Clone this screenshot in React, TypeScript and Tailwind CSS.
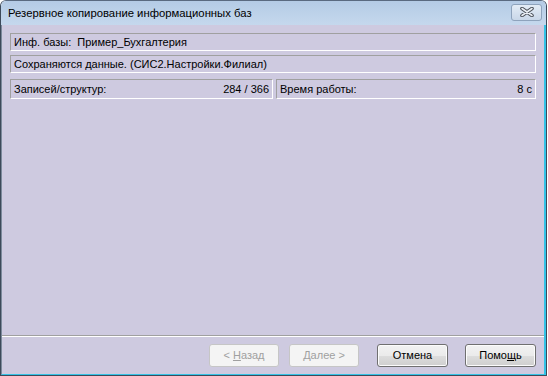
import React from "react";

const font = { fontFamily: '"Liberation Sans", Arial, sans-serif' };

function Field({ children, className = "" }: { children: React.ReactNode; className?: string }) {
  return (
    <div
      className={
        "flex items-center border border-t-[#a0a0a0] border-l-[#a0a0a0] border-b-white border-r-white px-[3px] text-[11px] text-black " +
        className
      }
    >
      {children}
    </div>
  );
}

function Btn({ children, disabled, className = "" }: { children: React.ReactNode; disabled?: boolean; className?: string }) {
  return disabled ? (
    <div className={"flex h-[23px] w-[70px] items-center justify-center rounded-[3px] border border-[#c6c6c6] bg-[#f4f4f4] text-[11px] text-[#a0a0a0] " + className}>
      {children}
    </div>
  ) : (
    <div className={"flex h-[23px] w-[71px] items-center justify-center rounded-[3px] border border-[#707070] bg-[linear-gradient(#f2f2f2_0%,#ebebeb_50%,#dddddd_51%,#cfcfcf_100%)] text-[11px] text-black shadow-[inset_0_0_0_1px_#fcfcfc] " + className}>
      {children}
    </div>
  );
}

export default function App() {
  return (
    <div className="h-[376px] w-[548px] bg-white" style={font}>
      <div className="flex h-[376px] w-[547px] flex-col overflow-hidden rounded-t-[6px] border border-[#3d4a5a] border-t-[#5a6a80]">
        <div className="flex h-[24px] shrink-0 items-center justify-between bg-[linear-gradient(#b4cbe5,#c5d8ed)] pl-[7px] pr-[4px]">
          <span className="text-[11.3px] text-black">Резервное копирование информационных баз</span>
          <div className="mt-[-2px] flex h-[17px] w-[31px] items-center justify-center rounded-[3px] border border-[#8ea3bc] bg-[linear-gradient(#e3ecf6,#c9d7e8)]">
            <svg width="14" height="10" viewBox="0 0 14 10">
              <path d="M2 1.5 L12 8.5 M12 1.5 L2 8.5" stroke="#4a4f57" strokeWidth="3.6" strokeLinecap="round" />
              <path d="M2 1.5 L12 8.5 M12 1.5 L2 8.5" stroke="#e9eef4" strokeWidth="1.6" strokeLinecap="round" />
            </svg>
          </div>
        </div>
        <div className="flex flex-1 flex-col border-l border-r-2 border-b border-l-[#7c8a9c] border-r-[#33c3e6] border-b-[#33c3e6] bg-[#cecae0]">
          <div className="flex flex-1 flex-col px-[8px] pt-[8px]">
            <Field className="h-[18px]">Инф. базы:&nbsp;&nbsp;Пример_Бухгалтерия</Field>
            <Field className="mt-[4px] h-[18px]">Сохраняются данные. (СИС2.Настройки.Филиал)</Field>
            <div className="mt-[6px] flex gap-[3px]">
              <Field className="h-[20px] w-[263px] justify-between">
                <span>Записей/структур:</span>
                <span>284 / 366</span>
              </Field>
              <Field className="h-[20px] flex-1 justify-between">
                <span>Время работы:</span>
                <span>8 с</span>
              </Field>
            </div>
          </div>
          <div className="h-[2px] border-t border-t-[#a0a0a0] border-b border-b-white" />
          <div className="flex h-[37px] items-start justify-end pr-[8px] pt-[7px]">
            <Btn disabled>
              &lt; <span className="ml-[3px] underline">Н</span>азад
            </Btn>
            <Btn disabled className="ml-[10px]">
              <span className="underline">Д</span>алее &gt;
            </Btn>
            <Btn className="ml-[18px]">Отмена</Btn>
            <Btn className="ml-[17px]">
              Помо<span className="underline">щ</span>ь
            </Btn>
          </div>
        </div>
      </div>
    </div>
  );
}
